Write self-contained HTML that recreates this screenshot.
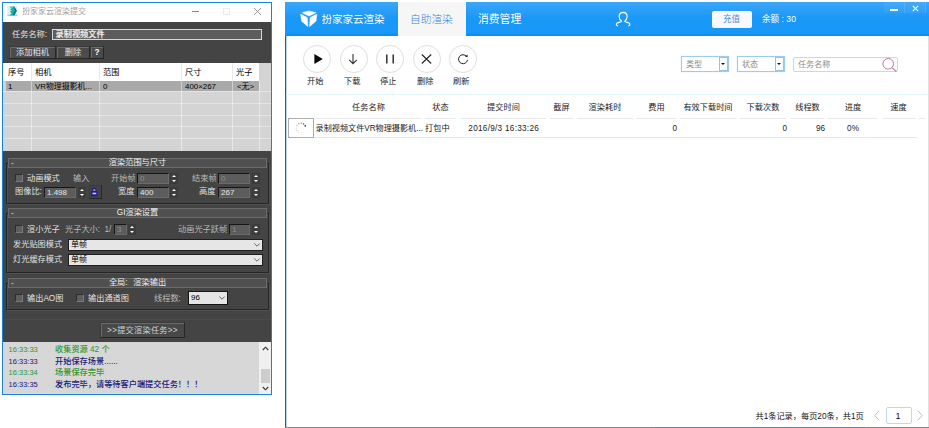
<!DOCTYPE html>
<html lang="zh-CN">
<head>
<meta charset="utf-8">
<title>扮家家云渲染</title>
<style>
html,body{margin:0;padding:0;}
body{width:929px;height:428px;position:relative;overflow:hidden;background:#fff;
 font-family:"Liberation Sans","Noto Sans CJK SC",sans-serif;font-size:8px;line-height:1;color:#000;}
.a{position:absolute;white-space:nowrap;}
.t{position:absolute;white-space:nowrap;line-height:10px;height:10px;}
/* ---------- left window ---------- */
#lw{left:2px;top:2px;width:270px;height:393px;box-sizing:border-box;border:1px solid #1883d7;background:#444;}
#lw-title{left:3px;top:3px;width:268px;height:19px;background:#fff;}
.lt{color:#e2e2e2;font-size:8.2px;}
.fld{background:#5c5c5c;box-sizing:border-box;border:1px solid #161616;border-right-color:#6a6a6a;border-bottom-color:#6a6a6a;color:#e8e8e8;font-size:8px;line-height:8px;padding:0 0 0 2px;}
.spin{width:8px;height:11px;box-sizing:border-box;background:#3e3e3e;border:1px solid #3a3a3a;}
.spin:before,.spin:after{content:"";position:absolute;left:1px;border-left:2px solid transparent;border-right:2px solid transparent;}
.spin:before{top:1.2px;border-bottom:2.6px solid #fff;}
.spin:after{bottom:1.2px;border-top:2.6px solid #fff;}
.btn{box-sizing:border-box;background:#4b4b4b;border:1px solid #262626;border-top-color:#3a3a3a;border-left-color:#3a3a3a;box-shadow:inset 1px 1px 0 #6c6c6c;color:#e4e4e4;text-align:center;font-size:8.2px;}
.gbox{box-sizing:border-box;border:1px solid #262626;box-shadow:inset 1px 1px 0 #505050, 1px 1px 0 #505050;}
.gtitle{box-sizing:border-box;background:#505050;border:1px solid #6b6b6b;color:#f0f0f0;text-align:center;font-size:8.2px;line-height:8px;height:10px;}
.chk{width:8px;height:8px;box-sizing:border-box;background:#5e5e5e;border:1px solid #2c2c2c;border-right-color:#7a7a7a;border-bottom-color:#7a7a7a;}
.sel{box-sizing:border-box;background:#e6e6e6;border:1px solid #1e1e1e;color:#000;font-size:8px;line-height:10px;padding-left:2px;}
.sel svg{position:absolute;right:2.4px;top:3px;}
.log{font-size:8.2px;line-height:10px;height:10px;font-weight:500;}
.tm{font-size:7.5px;}
.g{color:#2f962f;}
.n{color:#17177c;}
/* ---------- right window ---------- */
#rw-head{left:285px;top:2px;width:644px;height:34px;background:linear-gradient(#3aa6f9 0%,#2ea0f8 20%,#1998f7 48%,#1797f7 90%,#0f8aec 100%);}
.rt{font-size:8.2px;color:#222;}

.cir{width:27.5px;height:27.5px;box-sizing:border-box;border:1px solid #dedede;border-radius:50%;background:#fff;}
.hl{top:118px;height:1px;background:#e9e9e9;}
.hc{top:102.5px;text-align:center;}
.cmb{box-sizing:border-box;border:1px solid #9ccbee;background:#fff;box-shadow:0 0 1px #bfe0f7;}
.cmb span{position:absolute;left:4px;top:3px;font-size:8.1px;line-height:10px;color:#8a8a8a;}
.cmb i{position:absolute;right:0;top:0;width:9px;height:14px;box-sizing:border-box;border:1px solid #8fc4ec;background:#fdfeff;}
.cmb i:after{content:"";position:absolute;left:1.4px;top:4.6px;border-left:2.1px solid transparent;border-right:2.1px solid transparent;border-top:2.6px solid #111;}
</style>
</head>
<body>

<!-- ================= LEFT WINDOW ================= -->
<div id="lw" class="a"></div>
<div id="lw-title" class="a"></div>
<svg class="a" style="left:0;top:0" width="40" height="30" viewBox="0 0 571 428">
  <rect x="105" y="90" width="145" height="132" fill="#dbeff2"/>
  <rect x="105" y="212" width="145" height="18" fill="#9ccfd3"/>
  <path d="M136 97 L202 94 L240 152 L206 216 L136 216 L166 188 L140 166 L170 151 L140 134 L166 118 Z" fill="#14b1ae"/>
  <path d="M186 95 L202 94 L240 152 L206 216 L180 216 L214 152 Z" fill="#0a7883"/>
  <path d="M136 97 L186 95 L196 112 L166 118 Z" fill="#3fcfc6"/>
</svg>
<div class="t" style="left:22px;top:7px;font-size:8px;color:#a0a0a0;">扮家家云渲染提交</div>
<div class="a" style="left:192px;top:11px;width:7px;height:1px;background:#8a8a8a;"></div>
<div class="a" style="left:223px;top:8px;width:7px;height:7px;box-sizing:border-box;border:1px solid #eaeaea;"></div>
<svg class="a" style="left:253px;top:7px" width="9" height="9" viewBox="0 0 9 9"><path d="M1 1 L8 8 M8 1 L1 8" stroke="#8a8a8a" stroke-width="0.9" fill="none"/></svg>

<!-- task name -->
<div class="t lt" style="left:12px;top:30.4px;">任务名称:</div>
<div class="a" style="left:52px;top:28.6px;width:210px;height:11px;box-sizing:border-box;background:#5c5c5c;border:1px solid #d8d8d8;"></div>
<div class="t" style="left:55.5px;top:30.3px;font-size:8.2px;color:#f2f2f2;text-shadow:0 0 1px #fff;">录制视频文件</div>

<!-- buttons -->
<div class="a btn" style="left:9px;top:46px;width:47px;height:13px;line-height:11px;">添加相机</div>
<div class="a btn" style="left:56px;top:46px;width:34px;height:13px;line-height:11px;">删除</div>
<div class="a btn" style="left:90px;top:46px;width:14px;height:13px;line-height:11px;font-weight:bold;color:#fff;">?</div>

<!-- camera table -->
<div class="a" style="left:3px;top:63px;width:268px;height:88px;background:#d4d4d4;"></div>
<div class="a" style="left:3px;top:63px;width:256px;height:18px;background:#fff;"></div>
<div class="a" style="left:6px;top:81px;width:253px;height:10px;background:#a9a9a9;"></div>
<!-- row separators -->
<div class="a" style="left:3px;top:91px;width:268px;height:1px;background:#e4e4e4;"></div>
<div class="a" style="left:3px;top:103px;width:268px;height:1px;background:#e4e4e4;"></div>
<div class="a" style="left:3px;top:115px;width:268px;height:1px;background:#e4e4e4;"></div>
<div class="a" style="left:3px;top:126px;width:268px;height:1px;background:#e4e4e4;"></div>
<div class="a" style="left:3px;top:138px;width:268px;height:1px;background:#e4e4e4;"></div>
<!-- col separators -->
<div class="a" style="left:31px;top:63px;width:1px;height:88px;background:rgba(255,255,255,.45);"></div>
<div class="a" style="left:99px;top:63px;width:1px;height:88px;background:rgba(255,255,255,.45);"></div>
<div class="a" style="left:181px;top:63px;width:1px;height:88px;background:rgba(255,255,255,.45);"></div>
<div class="a" style="left:232px;top:63px;width:1px;height:88px;background:rgba(255,255,255,.45);"></div>
<div class="a" style="left:259px;top:81px;width:1px;height:70px;background:rgba(255,255,255,.45);"></div>
<div class="a" style="left:31px;top:63px;width:1px;height:18px;background:#e8e8e8;"></div>
<div class="a" style="left:99px;top:63px;width:1px;height:18px;background:#e8e8e8;"></div>
<div class="a" style="left:181px;top:63px;width:1px;height:18px;background:#e8e8e8;"></div>
<div class="a" style="left:232px;top:63px;width:1px;height:18px;background:#e8e8e8;"></div>
<!-- header text -->
<div class="t" style="left:8px;top:68px;font-size:8.2px;">序号</div>
<div class="t" style="left:35px;top:68px;font-size:8.2px;">相机</div>
<div class="t" style="left:103px;top:68px;font-size:8.2px;">范围</div>
<div class="t" style="left:185px;top:68px;font-size:8.2px;">尺寸</div>
<div class="t" style="left:236px;top:68px;font-size:8.2px;">光子</div>
<!-- row 1 -->
<div class="t" style="left:8px;top:81.5px;font-size:7.9px;">1</div>
<div class="t" style="left:35px;top:81.5px;font-size:7.9px;">VR物理摄影机...</div>
<div class="t" style="left:103px;top:81.5px;font-size:7.9px;">0</div>
<div class="t" style="left:185px;top:81.5px;font-size:7.9px;">400×267</div>
<div class="t" style="left:237px;top:81.5px;font-size:7.9px;">&lt;无&gt;</div>

<!-- ===== group 1 ===== -->
<div class="a gbox" style="left:6px;top:163px;width:263px;height:41px;"></div>
<div class="a gtitle" style="left:8px;top:158px;width:259px;">渲染范围与尺寸</div>
<div class="t" style="left:11px;top:158px;color:#f0f0f0;font-size:8px;">-</div>
<div class="a chk" style="left:15px;top:174px;"></div>
<div class="t lt" style="left:27px;top:174px;">动画模式</div>
<div class="t lt" style="left:73px;top:174px;color:#b9b9b9;">输入</div>
<div class="t lt" style="left:111px;top:174px;color:#b9b9b9;">开始帧</div>
<div class="a fld" style="left:137px;top:173px;width:32px;height:11px;color:#8e8e8e;line-height:9px;">0</div>
<div class="a spin" style="left:170px;top:173px;"></div>
<div class="t lt" style="left:192px;top:174px;color:#b9b9b9;">结束帧</div>
<div class="a fld" style="left:218px;top:173px;width:32px;height:11px;color:#8e8e8e;line-height:9px;">0</div>
<div class="a spin" style="left:252px;top:173px;"></div>

<div class="t lt" style="left:15px;top:187px;">图像比:</div>
<div class="a fld" style="left:44px;top:187px;width:32px;height:11px;line-height:9px;">1.498</div>
<div class="a spin" style="left:77.5px;top:187px;"></div>
<div class="a btn" style="left:88.5px;top:185.3px;width:13.2px;height:13.4px;background:#424242;box-shadow:none;"></div>
<svg class="a" style="left:90px;top:186px" width="10" height="11" viewBox="0 0 10 11"><path d="M2.6 5.4 V4 A1.7 1.9 0 0 1 6 4 V5.4" fill="#8c8c70" stroke="#1b1ba4" stroke-width="1.1"/><rect x="1" y="5" width="6.6" height="5.2" rx="0.8" fill="#1b1ba4"/><rect x="2.5" y="6.7" width="3.8" height="1.6" fill="#cfcfba"/></svg>
<div class="t lt" style="left:118px;top:187px;">宽度</div>
<div class="a fld" style="left:137px;top:187px;width:32px;height:11px;line-height:9px;">400</div>
<div class="a spin" style="left:170px;top:187px;"></div>
<div class="t lt" style="left:199px;top:187px;">高度</div>
<div class="a fld" style="left:218px;top:187px;width:32px;height:11px;line-height:9px;">267</div>
<div class="a spin" style="left:252px;top:187px;"></div>

<!-- ===== group 2 ===== -->
<div class="a gbox" style="left:6px;top:213px;width:263px;height:60px;"></div>
<div class="a gtitle" style="left:8px;top:208px;width:259px;">GI渲染设置</div>
<div class="t" style="left:11px;top:208px;color:#f0f0f0;font-size:8px;">-</div>
<div class="a chk" style="left:15px;top:225px;"></div>
<div class="t lt" style="left:27px;top:225px;">渲小光子</div>
<div class="t lt" style="left:65px;top:225px;color:#b9b9b9;">光子大小:</div>
<div class="t lt" style="left:104.5px;top:225px;color:#b9b9b9;">1/</div>
<div class="a fld" style="left:114px;top:224px;width:13px;height:11px;color:#8e8e8e;line-height:9px;">3</div>
<div class="a spin" style="left:128px;top:224px;"></div>
<div class="t lt" style="left:178px;top:225px;color:#b9b9b9;">动画光子跃帧</div>
<div class="a fld" style="left:229px;top:224px;width:21px;height:11px;color:#8e8e8e;line-height:9px;">1</div>
<div class="a spin" style="left:252px;top:224px;"></div>

<div class="t lt" style="left:13px;top:240px;">发光贴图模式</div>
<div class="a sel" style="left:68px;top:239px;width:195px;height:12px;">单帧<svg width="6" height="4" viewBox="0 0 6 4"><path d="M0.3 0.5 L3 3.2 L5.7 0.5" fill="none" stroke="#444" stroke-width="0.8"/></svg></div>
<div class="t lt" style="left:13px;top:255px;">灯光缓存模式</div>
<div class="a sel" style="left:68px;top:254px;width:195px;height:12px;">单帧<svg width="6" height="4" viewBox="0 0 6 4"><path d="M0.3 0.5 L3 3.2 L5.7 0.5" fill="none" stroke="#444" stroke-width="0.8"/></svg></div>

<!-- ===== group 3 ===== -->
<div class="a gbox" style="left:6px;top:283px;width:263px;height:27px;"></div>
<div class="a gtitle" style="left:8px;top:278px;width:259px;word-spacing:3.5px;">全局: 渲染输出</div>
<div class="t" style="left:11px;top:278px;color:#f0f0f0;font-size:8px;">-</div>
<div class="a chk" style="left:15px;top:294px;"></div>
<div class="t lt" style="left:27px;top:294px;">输出AO图</div>
<div class="a chk" style="left:76px;top:294px;"></div>
<div class="t lt" style="left:88px;top:294px;">输出通道图</div>
<div class="t lt" style="left:154px;top:294px;color:#b9b9b9;">线程数:</div>
<div class="a sel" style="left:188px;top:291px;width:40px;height:14px;line-height:12px;background:#e5e5e5;border-color:#141414;">96<svg width="6" height="4" viewBox="0 0 6 4" style="top:4px"><path d="M0.3 0.5 L3 3.2 L5.7 0.5" fill="none" stroke="#444" stroke-width="0.8"/></svg></div>

<!-- submit -->
<div class="a" style="left:3px;top:319px;width:268px;height:1px;background:#4b4b4b;"></div>
<div class="a btn" style="left:100px;top:322px;width:85px;height:16px;line-height:16px;letter-spacing:0.25px;color:#d2d2d2;background:#484848;">&gt;&gt;提交渲染任务&gt;&gt;</div>

<!-- log -->
<div class="a" style="left:3px;top:342px;width:268px;height:52px;background:#d7d7d7;"></div>
<div class="a" style="left:259px;top:342px;width:12px;height:52px;background:#f0f0f0;"></div>
<div class="a" style="left:260.5px;top:369px;width:9.5px;height:14px;background:#cdcdcd;"></div>
<svg class="a" style="left:262px;top:346px" width="7" height="5" viewBox="0 0 7 5"><path d="M0.8 4 L3.5 1.2 L6.2 4" fill="none" stroke="#333" stroke-width="1.1"/></svg>
<svg class="a" style="left:262px;top:386px" width="7" height="5" viewBox="0 0 7 5"><path d="M0.8 1 L3.5 3.8 L6.2 1" fill="none" stroke="#333" stroke-width="1.1"/></svg>
<div class="t log tm g" style="left:8.6px;top:345px;">16:33:33</div><div class="t log g" style="left:55px;top:345px;">收集资源 42 个</div>
<div class="t log tm n" style="left:8.6px;top:357px;">16:33:33</div><div class="t log n" style="left:55px;top:357px;">开始保存场景......</div>
<div class="t log tm g" style="left:8.6px;top:368px;">16:33:34</div><div class="t log g" style="left:55px;top:368px;">场景保存完毕</div>
<div class="t log tm n" style="left:8.6px;top:380px;">16:33:35</div><div class="t log n" style="left:55px;top:380px;">发布完毕，请等待客户端提交任务！！！</div>

<!-- ================= RIGHT WINDOW ================= -->
<div id="rw-head" class="a"></div>
<div class="a" style="left:285px;top:36px;width:1px;height:392px;background:#1261ab;"></div>
<div class="a" style="left:286px;top:36px;width:1px;height:391px;background:rgba(18,97,171,.28);"></div>
<div class="a" style="left:928px;top:36px;width:1px;height:392px;background:#e0e0e0;"></div>
<div class="a" style="left:285px;top:427px;width:644px;height:1px;background:#868686;"></div>
<div class="a" style="left:655px;top:427px;width:210px;height:1px;background:#5d84a6;"></div>
<!-- active tab -->
<div class="a" style="left:398px;top:2px;width:68px;height:34px;background:#f6f6f6;"></div>
<!-- logo -->
<svg class="a" style="left:295px;top:5px" width="30" height="27" viewBox="0 0 476 428">
  <g fill="#fff" stroke="#fff" stroke-width="10" stroke-linejoin="round">
  <path d="M116 122 L208 98 L232 98 L330 121 L222 176 Z"/>
  <path d="M90 146 L194 200 L204 340 L106 258 Z"/>
  <path d="M346 146 L240 200 L232 340 L334 254 Z"/>
  </g>
</svg>
<div class="t" style="left:321.6px;top:13px;font-size:10.5px;line-height:12px;height:12px;color:#fff;">扮家家云渲染</div>
<div class="t" style="left:410px;top:13px;font-size:10.7px;line-height:12px;height:12px;color:#3a7fdc;font-weight:300;">自助渲染</div>
<div class="t" style="left:478px;top:13px;font-size:10.8px;line-height:12px;height:12px;color:#fff;">消费管理</div>
<!-- user icon -->
<svg class="a" style="left:608px;top:6px" width="30" height="27" viewBox="0 0 476 428">
  <path d="M150 314 Q126 304 132 286 Q140 268 175 260 Q212 252 216 240 Q180 215 176 170 Q178 102 240 100 Q302 102 304 170 Q300 215 264 240 Q268 252 305 260 Q340 268 348 286 Q354 304 330 314" fill="none" stroke="#fff" stroke-width="18" stroke-linecap="round" stroke-linejoin="round"/>
</svg>
<!-- recharge -->
<div class="a" style="left:712px;top:11px;width:40px;height:17px;background:#f7f9ff;border-radius:2px;"></div>
<div class="t" style="left:723px;top:14px;font-size:8.6px;color:#4a8fe4;">充值</div>
<div class="t" style="left:762px;top:14px;font-size:8.6px;color:#fff;">余额 : 30</div>
<!-- window buttons -->
<div class="a" style="left:884px;top:2px;width:21px;height:11px;background:rgba(255,255,255,.05);border-right:1px solid rgba(255,255,255,.12);box-sizing:border-box;"></div>
<div class="a" style="left:905px;top:2px;width:21px;height:11px;background:rgba(255,255,255,.05);border-right:1px solid rgba(255,255,255,.12);box-sizing:border-box;"></div>
<div class="a" style="left:890px;top:9.4px;width:8.4px;height:1.2px;background:#fff;"></div>
<svg class="a" style="left:912px;top:5px" width="7" height="7" viewBox="0 0 7 7"><path d="M0.8 0.8 L6.2 6.2 M6.2 0.8 L0.8 6.2" stroke="#fff" stroke-width="1.1" fill="none"/></svg>

<!-- toolbar circles -->
<div class="a cir" style="left:303px;top:45px;"></div>
<div class="a cir" style="left:340px;top:45px;"></div>
<div class="a cir" style="left:376px;top:45px;"></div>
<div class="a cir" style="left:413px;top:45px;"></div>
<div class="a cir" style="left:449px;top:45px;"></div>
<svg class="a" style="left:312.5px;top:53px" width="11" height="12" viewBox="0 0 11 12"><path d="M1.4 1 L9.8 6 L1.4 11 Z" fill="#0a0a0a"/></svg>
<svg class="a" style="left:348px;top:53px" width="10" height="12" viewBox="0 0 10 12"><path d="M5 1 V10.5 M1.2 6.8 L5 10.6 L8.8 6.8" stroke="#333" stroke-width="1.1" fill="none"/></svg>
<svg class="a" style="left:385px;top:54px" width="10" height="10" viewBox="0 0 10 10"><path d="M1.8 0.5 V9.5 M8.2 0.5 V9.5" stroke="#222" stroke-width="1.4" fill="none"/></svg>
<svg class="a" style="left:421px;top:54px" width="11" height="10" viewBox="0 0 11 10"><path d="M0.8 0.5 L10.2 9.5 M10.2 0.5 L0.8 9.5" stroke="#222" stroke-width="1.1" fill="none"/></svg>
<svg class="a" style="left:457px;top:53px" width="12" height="12" viewBox="0 0 12 12"><path d="M9.5 3.3 A4.5 4.5 0 1 0 10.5 6.9" stroke="#222" stroke-width="1" fill="none"/><path d="M7.9 3.7 L10.7 4.1 L10.5 1.4 Z" fill="#222"/></svg>
<div class="t rt" style="left:307px;top:77px;">开始</div>
<div class="t rt" style="left:344px;top:77px;">下载</div>
<div class="t rt" style="left:380px;top:77px;">停止</div>
<div class="t rt" style="left:417px;top:77px;">删除</div>
<div class="t rt" style="left:453px;top:77px;">刷新</div>

<!-- filters -->
<div class="a cmb" style="left:681px;top:56px;width:48px;height:16px;"><span>类型</span><i></i></div>
<div class="a cmb" style="left:737px;top:56px;width:48px;height:16px;"><span>状态</span><i></i></div>
<div class="a" style="left:793px;top:56.5px;width:105px;height:15.5px;box-sizing:border-box;border:1px solid #c9d8e6;border-radius:2px;background:#fff;"></div>
<div class="t" style="left:798px;top:60.4px;font-size:8.1px;color:#8a8a8a;">任务名称</div>
<svg class="a" style="left:881px;top:57px" width="17" height="16" viewBox="0 0 17 16"><circle cx="7.2" cy="6.8" r="5.3" fill="none" stroke="#b279a6" stroke-width="1"/><path d="M11 10.6 L15.4 14.6" stroke="#b279a6" stroke-width="1.2"/></svg>

<!-- grid -->
<div class="a" style="left:286px;top:94px;width:641px;height:1px;background:#e3f7f9;"></div>
<div class="a hl" style="left:316px;width:105px;"></div>
<div class="a hl" style="left:425px;width:31px;"></div>
<div class="a hl" style="left:461px;width:85px;"></div>
<div class="a hl" style="left:550px;width:23px;"></div>
<div class="a hl" style="left:577px;width:56px;"></div>
<div class="a hl" style="left:637px;width:39px;"></div>
<div class="a hl" style="left:680px;width:56px;"></div>
<div class="a hl" style="left:740px;width:46px;"></div>
<div class="a hl" style="left:791px;width:33px;"></div>
<div class="a hl" style="left:828px;width:50px;"></div>
<div class="a hl" style="left:882px;width:33px;"></div>
<div class="a hl" style="left:919px;width:7px;"></div>
<div class="a" style="left:314px;top:137px;width:603px;height:1px;background:#e6e6e6;"></div>

<div class="t rt hc" style="left:316px;width:105px;">任务名称</div>
<div class="t rt hc" style="left:425px;width:31px;">状态</div>
<div class="t rt hc" style="left:461px;width:85px;">提交时间</div>
<div class="t rt hc" style="left:550px;width:23px;">截屏</div>
<div class="t rt hc" style="left:577px;width:56px;">渲染耗时</div>
<div class="t rt hc" style="left:637px;width:39px;">费用</div>
<div class="t rt hc" style="left:680px;width:56px;">有效下载时间</div>
<div class="t rt hc" style="left:740px;width:46px;">下载次数</div>
<div class="t rt hc" style="left:791px;width:33px;">线程数</div>
<div class="t rt hc" style="left:828px;width:50px;">进度</div>
<div class="t rt hc" style="left:882px;width:33px;">速度</div>

<!-- row -->
<div class="a" style="left:288px;top:118px;width:26px;height:20px;box-sizing:border-box;border:1px solid #adadad;background:#fff;"></div>
<svg class="a" style="left:295px;top:122px" width="12" height="12" viewBox="0 0 12 12"><circle cx="6.42" cy="10.78" r="0.45" fill="#333" fill-opacity="0.15"/><circle cx="3.60" cy="10.16" r="0.5" fill="#333" fill-opacity="0.3"/><circle cx="1.84" cy="8.40" r="0.5" fill="#333" fill-opacity="0.4"/><circle cx="1.20" cy="6.00" r="0.55" fill="#333" fill-opacity="0.45"/><circle cx="1.84" cy="3.60" r="0.55" fill="#333" fill-opacity="0.5"/><circle cx="3.82" cy="1.72" r="0.6" fill="#333" fill-opacity="0.6"/><circle cx="6.25" cy="1.21" r="0.65" fill="#333" fill-opacity="0.75"/><circle cx="8.61" cy="1.97" r="0.75" fill="#333" fill-opacity="0.9"/><circle cx="10.28" cy="3.82" r="0.85" fill="#333" fill-opacity="1.0"/></svg>
<div class="t rt" style="left:315.5px;top:124px;font-size:8.15px;">录制视频文件VR物理摄影机...</div>
<div class="t rt" style="left:425px;top:124px;">打包中</div>
<div class="t rt" style="left:468.3px;top:124px;letter-spacing:0.28px;">2016/9/3 16:33:26</div>
<div class="t rt" style="left:637px;top:124px;width:40px;text-align:right;">0</div>
<div class="t rt" style="left:740px;top:124px;width:47px;text-align:right;">0</div>
<div class="t rt" style="left:791px;top:124px;width:34px;text-align:right;">96</div>
<div class="t rt" style="left:828px;top:124px;width:50px;text-align:center;">0%</div>

<!-- footer -->
<div class="t" style="left:755.5px;top:412px;font-size:8.2px;color:#111;">共1条记录，每页20条，共1页</div>
<svg class="a" style="left:874px;top:410px" width="6" height="11" viewBox="0 0 6 11"><path d="M5.2 0.6 L0.8 5.5 L5.2 10.4" stroke="#bdbdbd" stroke-width="1" fill="none"/></svg>
<div class="a" style="left:886px;top:407px;width:25.5px;height:17px;box-sizing:border-box;border:1px solid #c4d6e6;border-radius:2px;background:#fff;"></div>
<div class="t" style="left:885.5px;top:411px;width:25px;text-align:center;font-size:9px;color:#111;">1</div>
<svg class="a" style="left:917px;top:410px" width="6" height="11" viewBox="0 0 6 11"><path d="M0.8 0.6 L5.2 5.5 L0.8 10.4" stroke="#bdbdbd" stroke-width="1" fill="none"/></svg>
</body>
</html>
